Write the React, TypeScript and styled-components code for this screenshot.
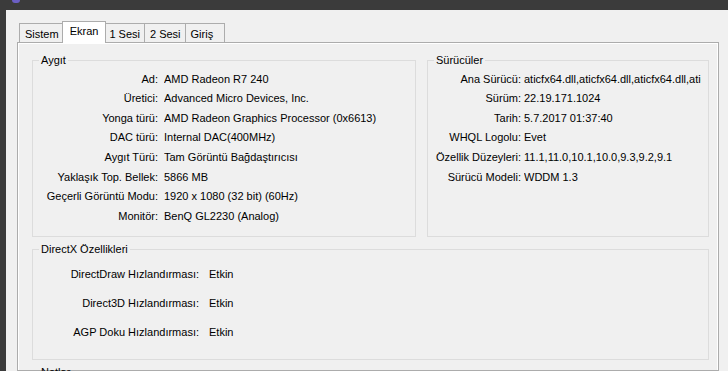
import { createGlobalStyle, styled } from 'styled-components';

const GlobalStyle = createGlobalStyle`
  html, body {
    margin: 0;
    padding: 0;
    background: #f0f0f0;
    overflow: hidden;
  }
  body {
    font-family: 'Liberation Sans', Arial, sans-serif;
    font-size: 11px;
    color: #000;
  }
`;

type Row = [string, string];

const deviceRows: Row[] = [
  ['Ad:', 'AMD Radeon R7 240'],
  ['Üretici:', 'Advanced Micro Devices, Inc.'],
  ['Yonga türü:', 'AMD Radeon Graphics Processor (0x6613)'],
  ['DAC türü:', 'Internal DAC(400MHz)'],
  ['Aygıt Türü:', 'Tam Görüntü Bağdaştırıcısı'],
  ['Yaklaşık Top. Bellek:', '5866 MB'],
  ['Geçerli Görüntü Modu:', '1920 x 1080 (32 bit) (60Hz)'],
  ['Monitör:', 'BenQ GL2230 (Analog)'],
];

const driverRows: Row[] = [
  ['Ana Sürücü:', 'aticfx64.dll,aticfx64.dll,aticfx64.dll,aticfx64.dll'],
  ['Sürüm:', '22.19.171.1024'],
  ['Tarih:', '5.7.2017 01:37:40'],
  ['WHQL Logolu:', 'Evet'],
  ['Özellik Düzeyleri:', '11.1,11.0,10.1,10.0,9.3,9.2,9.1'],
  ['Sürücü Modeli:', 'WDDM 1.3'],
];

const dxRows: Row[] = [
  ['DirectDraw Hızlandırması:', 'Etkin'],
  ['Direct3D Hızlandırması:', 'Etkin'],
  ['AGP Doku Hızlandırması:', 'Etkin'],
];

const tabs = ['Sistem', 'Ekran', '1 Sesi', '2 Sesi', 'Giriş'];

export default function App() {
  return (
    <Screen>
      <GlobalStyle />
      <TitleStrip>
        <AppIcon />
      </TitleStrip>
      <Body>
        <SideStrip />
        <Dialog>
          <TabRow>
            {tabs.map((t) => (
              <Tab key={t} $active={t === 'Ekran'}>
                {t}
              </Tab>
            ))}
          </TabRow>
          <Pane>
            <TopGroups>
              <Group $height={184}>
                <Legend>Aygıt</Legend>
                <InfoGrid $labelWidth={125} $gap={6} $rowHeight={19.57} $top={2}>
                  {deviceRows.map(([l, v]) => (
                    <InfoRow key={l} label={l} value={v} />
                  ))}
                </InfoGrid>
              </Group>
              <Group $height={184}>
                <Legend>Sürücüler</Legend>
                <InfoGrid $labelWidth={93} $gap={3} $rowHeight={19.57} $top={2} $right={7}>
                  {driverRows.map(([l, v]) => (
                    <InfoRow key={l} label={l} value={v} />
                  ))}
                </InfoGrid>
              </Group>
            </TopGroups>
            <Group $height={118}>
              <Legend>DirectX Özellikleri</Legend>
              <InfoGrid $labelWidth={166} $gap={10} $rowHeight={29} $top={3}>
                {dxRows.map(([l, v]) => (
                  <InfoRow key={l} label={l} value={v} />
                ))}
              </InfoGrid>
            </Group>
            <Group $height={60}>
              <Legend>Notlar</Legend>
            </Group>
          </Pane>
        </Dialog>
      </Body>
    </Screen>
  );
}

function InfoRow({ label, value }: { label: string; value: string }) {
  return (
    <>
      <Label>{label}</Label>
      <Value>{value}</Value>
    </>
  );
}

const Screen = styled.div`
  width: 728px;
  height: 371px;
  display: flex;
  flex-direction: column;
  overflow: hidden;
`;

const TitleStrip = styled.div`
  height: 10px;
  flex: none;
  background: #3b3b3b;
  position: relative;
`;

const AppIcon = styled.span`
  position: absolute;
  left: 12px;
  top: 0;
  width: 8px;
  height: 3px;
  border-radius: 0 0 3px 3px;
  background: #6b5fc4;
`;

const Body = styled.div`
  flex: 1;
  display: flex;
  min-height: 0;
`;

const SideStrip = styled.div`
  width: 6px;
  flex: none;
  background: #3b3b3b;
`;

const Dialog = styled.div`
  flex: 1;
  display: flex;
  flex-direction: column;
  padding: 11px 9px 0 11px;
  min-height: 0;
`;

const TabRow = styled.div`
  display: flex;
  align-items: flex-end;
  height: 22px;
  flex: none;
  padding-left: 2px;
  position: relative;
  z-index: 1;
  margin-bottom: -1px;
`;

const Tab = styled.div<{ $active: boolean }>`
  box-sizing: border-box;
  min-width: ${(p) => (p.$active ? '44px' : '40px')};
  height: ${(p) => (p.$active ? '22px' : '20px')};
  padding: ${(p) => (p.$active ? '2px 7px 0' : '3px 4px 0 5px')};
  border: 1px solid #acacac;
  border-bottom: ${(p) => (p.$active ? 'none' : '1px solid #acacac')};
  margin: ${(p) => (p.$active ? '0 -2px 0 -2px' : '0 0 0 -1px')};
  background: ${(p) => (p.$active ? '#ffffff' : '#f0f0f0')};
  position: relative;
  z-index: ${(p) => (p.$active ? 2 : 0)};
  line-height: 14px;
  white-space: nowrap;
  &:first-child {
    margin-left: 0;
  }
`;

const Pane = styled.div`
  flex: 1;
  border: 1px solid #acacac;
  box-shadow: inset 1px 1px 0 #fff, inset -1px 0 0 #fff;
  padding: 10px 9px 0 14px;
  display: flex;
  flex-direction: column;
  gap: 5px;
  min-height: 0;
`;

const TopGroups = styled.div`
  display: grid;
  grid-template-columns: 384px 1fr;
  column-gap: 11px;
  flex: none;
`;

const Group = styled.fieldset<{ $height: number }>`
  margin: 0;
  padding: 0;
  border: 1px solid #dcdcdc;
  box-sizing: border-box;
  height: ${(p) => p.$height}px;
  flex: none;
  min-width: 0;
  overflow: hidden;
`;

const Legend = styled.legend`
  margin-left: 6px;
  padding: 0 2px;
  line-height: 14px;
`;

const InfoGrid = styled.div<{
  $labelWidth: number;
  $gap: number;
  $rowHeight: number;
  $top: number;
  $right?: number;
}>`
  display: grid;
  grid-template-columns: ${(p) => p.$labelWidth}px minmax(0, 1fr);
  grid-auto-rows: ${(p) => p.$rowHeight}px;
  column-gap: ${(p) => p.$gap}px;
  align-items: center;
  padding: ${(p) => p.$top}px ${(p) => p.$right ?? 0}px 0 0;
`;

const Label = styled.div`
  text-align: right;
  white-space: nowrap;
`;

const Value = styled.div`
  white-space: nowrap;
  overflow: hidden;
`;
